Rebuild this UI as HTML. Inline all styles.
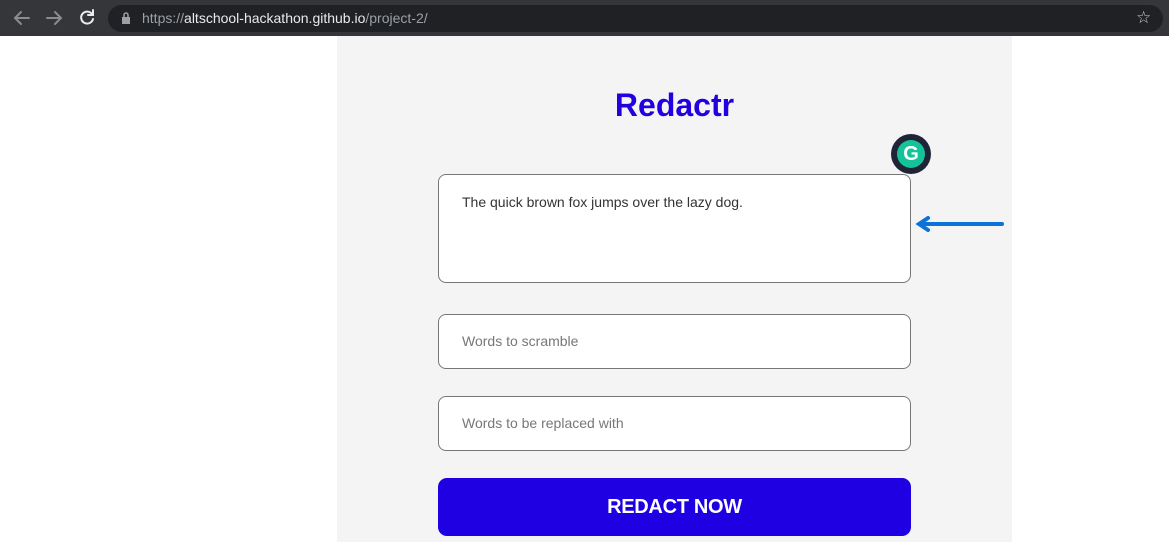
<!DOCTYPE html>
<html><head><style>
*{box-sizing:border-box;margin:0;padding:0}
body{width:1169px;height:542px;overflow:hidden;background:#fff;font-family:"Liberation Sans",sans-serif;position:relative}
.bar{position:absolute;left:0;top:0;width:1169px;height:36px;background:#35363a}
.url{position:absolute;left:108px;top:5px;width:1055px;height:27px;border-radius:14px;background:#202124;color:#9aa0a6;font-size:14px;line-height:27px;padding-left:34px}
.url b{color:#e8eaed;font-weight:normal}
.main{position:absolute;left:337px;top:36px;width:675px;height:506px;background:#f4f4f4}
h1{position:absolute;left:0;width:675px;top:51px;text-align:center;color:#2200e0;font-size:32px;font-weight:bold}
.box{position:absolute;left:101px;width:473px;background:#fff;border:1px solid #777;border-radius:8px;font-size:14px;padding-left:23px}
.btn{position:absolute;left:101px;top:442px;width:473px;height:58px;background:#1e00e3;border-radius:9px;color:#fff;font-weight:bold;font-size:20px;text-align:center;line-height:58px;letter-spacing:-0.3px}
</style></head><body>
<div class="bar">
<svg width="100" height="36" style="position:absolute;left:0;top:0" fill="none" stroke-width="2" stroke-linecap="round">
<path d="M29 18H15M21 12l-6 6 6 6" stroke="#8a8c8f"/><path d="M47 18h14M55 12l6 6-6 6" stroke="#8a8c8f"/>
<path d="M92 14a6 6 0 1 0 1 5" stroke="#e8eaed"/><path d="M93 10v5h-5" stroke="#e8eaed"/></svg>
<div class="url"><svg width="10" height="12" style="position:absolute;left:13px;top:7px"><rect x="1" y="5" width="8" height="7" fill="#9aa0a6"/><path d="M3 5V3a2 2 0 0 1 4 0v2" stroke="#9aa0a6" fill="none" stroke-width="1.5"/></svg>https://<b>altschool-hackathon.github.io</b>/project-2/</div>
<div style="position:absolute;left:1136px;top:8px;color:#c8c8c8;font-size:17px">☆</div>
</div>
<div class="main">
<h1>Redactr</h1>
<div class="box" style="top:138px;height:109px;padding-top:19px;color:#333">The quick brown fox jumps over the lazy dog.</div>
<div class="box" style="top:278px;height:55px;line-height:53px;color:#777">Words to scramble</div>
<div class="box" style="top:360px;height:55px;line-height:53px;color:#777">Words to be replaced with</div>
<div class="btn">REDACT NOW</div>
<div style="position:absolute;left:554px;top:98px;width:40px;height:40px;border-radius:50%;background:#1f2437"></div>
<div style="position:absolute;left:560px;top:104px;width:28px;height:28px;border-radius:50%;background:#15c39a;color:#fff;font-weight:bold;font-size:20px;text-align:center;line-height:28px">G</div>
<svg width="95" height="20" style="position:absolute;left:577px;top:178px"><path d="M6 10H88M14 4L5 10l9 6" stroke="#0b72d9" stroke-width="4" fill="none" stroke-linecap="round"/></svg>
</div>
</body></html>
